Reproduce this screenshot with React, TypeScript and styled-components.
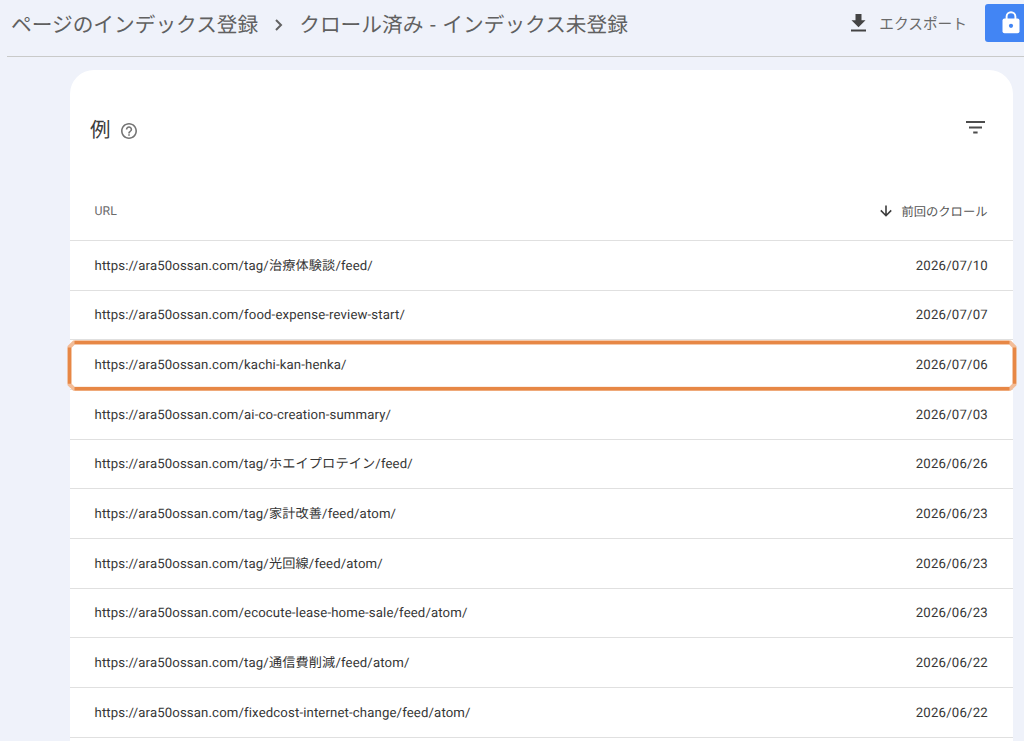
import React from "react";
import styled, { createGlobalStyle } from "styled-components";

const GlobalStyle = createGlobalStyle`
  * { box-sizing: border-box; }
  html, body { margin: 0; padding: 0; background: #eff2fa; }
  body {
    font-family: Roboto, "Noto Sans CJK JP", sans-serif;
    text-rendering: geometricPrecision;
    overflow: hidden;
  }
`;

const Page = styled.div`
  width: 1024px;
  height: 741px;
  overflow: hidden;
  background: #eff2fa;
`;

const TopBar = styled.header`
  display: flex;
  align-items: center;
  height: 57px;
  margin-left: 7px;
  padding: 0 0 9px 4px;
  border-bottom: 1px solid #c9cac9;
`;

const Crumb = styled.span`
  padding-top: 4px;
  font-size: 20.7px;
  line-height: 30px;
  word-spacing: 1.5px;
  color: #606060;
  white-space: nowrap;
`;

const Chevron = styled.svg`
  width: 8px;
  height: 12px;
  margin: 3px 16px 0 17px;
`;

const ExportButton = styled.button`
  display: flex;
  align-items: center;
  gap: 13px;
  margin-left: auto;
  margin-right: 18px;
  padding: 0;
  border: 0;
  background: none;
  font-family: inherit;
  font-size: 14.7px;
  line-height: 20px;
  color: #6a6a6a;
  white-space: nowrap;
`;

const DownloadIcon = styled.svg`
  width: 15px;
  height: 18px;
  margin-top: -2px;
`;

const LockButton = styled.button`
  display: flex;
  align-items: center;
  flex: none;
  width: 39px;
  height: 38px;
  margin-top: -2px;
  padding: 0 0 0 17px;
  border: 0;
  border-radius: 3px 0 0 3px;
  background: #4285f4;
`;

const Card = styled.main`
  width: 943px;
  height: 700px;
  margin: 13px 0 0 70px;
  border-radius: 24px 24px 0 0;
  background: #fff;
`;

const CardHeader = styled.div`
  display: flex;
  align-items: center;
  height: 113px;
  padding: 6px 28px 0 20px;
`;

const CardTitle = styled.h1`
  margin: 0;
  padding-top: 2px;
  font-size: 20.5px;
  line-height: 30px;
  font-weight: 400;
  color: #3c3c3c;
`;

const HelpIcon = styled.svg`
  width: 16px;
  height: 16px;
  margin: 2px 0 0 10px;
`;

const FilterIcon = styled.svg`
  width: 19px;
  height: 13px;
  margin: -5px 0 0 auto;
`;

const ColumnHeads = styled.div`
  display: flex;
  align-items: center;
  justify-content: space-between;
  height: 57px;
  padding: 0 25.5px 0 24.5px;
  font-size: 12.3px;
  letter-spacing: 0.1px;
  color: #6b6b6b;
`;

const SortHead = styled.div`
  display: flex;
  align-items: center;
  gap: 9px;
  padding-bottom: 2px;
  letter-spacing: 0;
  color: #555;
`;

const Row = styled.div`
  position: relative;
  display: flex;
  align-items: center;
  justify-content: space-between;
  height: 49.67px;
  padding: 2.9px 25px 0 24.5px;
  border-top: 1px solid #e0e0e0;
  font-size: 13.18px;
  letter-spacing: 0.135px;
  line-height: 20px;
  color: #363636;
  white-space: nowrap;
`;

const DateText = styled.span`
  letter-spacing: 0.22px;
`;

const Highlight = styled.svg`
  position: absolute;
  left: -3px;
  top: 0;
  width: 950px;
  height: 52px;
  z-index: 1;
`;

const rows: { url: string; date: string; marked?: boolean }[] = [
  { url: "tag/治療体験談/feed/", date: "2026/07/10" },
  { url: "food-expense-review-start/", date: "2026/07/07" },
  { url: "kachi-kan-henka/", date: "2026/07/06", marked: true },
  { url: "ai-co-creation-summary/", date: "2026/07/03" },
  { url: "tag/ホエイプロテイン/feed/", date: "2026/06/26" },
  { url: "tag/家計改善/feed/atom/", date: "2026/06/23" },
  { url: "tag/光回線/feed/atom/", date: "2026/06/23" },
  { url: "ecocute-lease-home-sale/feed/atom/", date: "2026/06/23" },
  { url: "tag/通信費削減/feed/atom/", date: "2026/06/22" },
  { url: "fixedcost-internet-change/feed/atom/", date: "2026/06/22" },
];

export default function App() {
  return (
    <Page lang="ja">
      <GlobalStyle />
      <TopBar>
        <Crumb>ページのインデックス登録</Crumb>
        <Chevron viewBox="0 0 8 12" fill="none" stroke="#626262" strokeWidth="2">
          <path d="M1 1l5 5-5 5" />
        </Chevron>
        <Crumb>クロール済み - インデックス未登録</Crumb>
        <ExportButton>
          <DownloadIcon viewBox="0 0 15 18" fill="#444">
            <path d="M4.5 0h6v6.2h4L7.5 13.2.5 6.2h4zM0 15.6h15v2H0z" />
          </DownloadIcon>
          エクスポート
        </ExportButton>
        <LockButton aria-label="lock">
          <svg width="18" height="23" viewBox="0 0 18 23">
            <path d="M4.6 9V5.6a4.4 4.4 0 0 1 8.8 0V9" fill="none" stroke="#fff" strokeWidth="1.9" />
            <rect x="0.5" y="7.6" width="17" height="14.6" rx="2" fill="#fff" />
            <circle cx="9" cy="14.8" r="2.1" fill="#4285f4" />
          </svg>
        </LockButton>
      </TopBar>
      <Card>
        <CardHeader>
          <CardTitle>例</CardTitle>
          <HelpIcon viewBox="2 2 20 20" fill="#757575">
            <path d="M11 18h2v-2h-2v2zm1-16C6.48 2 2 6.48 2 12s4.48 10 10 10 10-4.48 10-10S17.52 2 12 2zm0 18c-4.41 0-8-3.59-8-8s3.59-8 8-8 8 3.59 8 8-3.59 8-8 8zm0-14c-2.21 0-4 1.79-4 4h2c0-1.1.9-2 2-2s2 .9 2 2c0 2-3 1.75-3 5h2c0-2.25 3-2.5 3-5 0-2.21-1.79-4-4-4z" />
          </HelpIcon>
          <FilterIcon viewBox="0 0 19 13" fill="#4c4c4c">
            <path d="M0 0h19v2H0zM3 5.4h13v2H3zM7.2 10.6h4.4v2H7.2z" />
          </FilterIcon>
        </CardHeader>
        <ColumnHeads>
          <span>URL</span>
          <SortHead>
            <svg width="12" height="12" viewBox="0 0 12 12" fill="none" stroke="#3c3c3c" strokeWidth="1.6">
              <path d="M6 0.5v10M0.8 5.4L6 10.7l5.2-5.3" />
            </svg>
            前回のクロール
          </SortHead>
        </ColumnHeads>
        {rows.map((row) => (
          <Row key={row.url}>
            <span>https://ara50ossan.com/{row.url}</span>
            <DateText>{row.date}</DateText>
            {row.marked && (
              <Highlight viewBox="0 0 950 52" fill="none">
                <path d="M2.5 7L7 2.5H943L947.5 7V44.3L943 48.8H7L2.5 44.3Z" stroke="#f3bd98" strokeWidth="4" />
                <path d="M7.5 2.5H942.5M947.5 7.5V43.8M942.5 48.8H7.5M2.5 43.8V7.5" stroke="#e78745" strokeWidth="3.5" />
              </Highlight>
            )}
          </Row>
        ))}
        <Row />
      </Card>
    </Page>
  );
}
